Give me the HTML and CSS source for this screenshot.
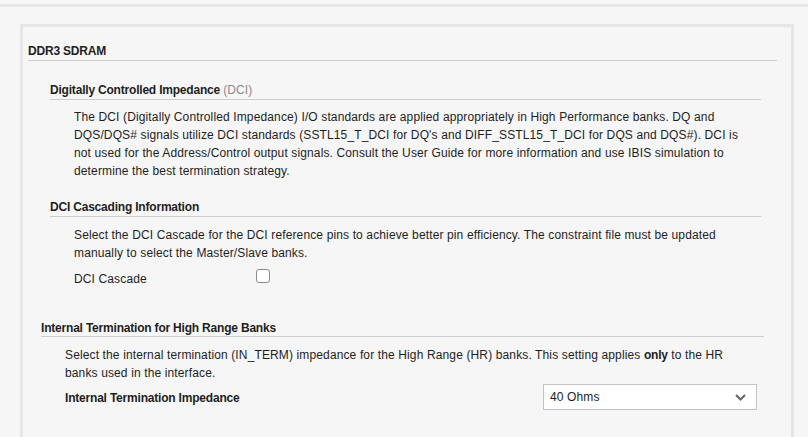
FILE: index.html
```html
<!DOCTYPE html>
<html>
<head>
<meta charset="utf-8">
<link rel="stylesheet" href="styles.css">
</head>
<body>
<div class="topbar"></div>
<div class="panel">
  <h1 class="main-title">DDR3 SDRAM</h1>

  <section class="sub">
    <h2 class="sub-title">Digitally Controlled Impedance <span class="muted">(DCI)</span></h2>
    <p class="desc">The DCI (Digitally Controlled Impedance) I/O standards are applied appropriately in High Performance banks. DQ and DQS/DQS# signals utilize DCI standards (SSTL15_T_DCI for DQ's and DIFF_SSTL15_T_DCI for DQS and DQS#). DCI is not used for the Address/Control output signals. Consult the User Guide for more information and use IBIS simulation to determine the best termination strategy.</p>
  </section>

  <section class="sub sub-cascade">
    <h2 class="sub-title">DCI Cascading Information</h2>
    <p class="desc">Select the DCI Cascade for the DCI reference pins to achieve better pin efficiency. The constraint file must be updated manually to select the Master/Slave banks.</p>
    <div class="row-check">
      <span class="lbl">DCI Cascade</span>
      <span class="checkbox"></span>
    </div>
  </section>

  <section class="sub3">
    <h2 class="sub-title">Internal Termination for High Range Banks</h2>
    <p class="desc">Select the internal termination (IN_TERM) impedance for the High Range (HR) banks. This setting applies <b>only</b> to the HR banks used in the interface.</p>
    <div class="row-select">
      <span class="lbl-bold">Internal Termination Impedance</span>
      <div class="select">
        <span>40 Ohms</span>
        <svg class="chev" width="11" height="7" viewBox="0 0 11 7"><path d="M1 1 L5.5 5.5 L10 1" fill="none" stroke="#666" stroke-width="2"/></svg>
      </div>
    </div>
  </section>
</div>
</body>
</html>
```

FILE: styles.css
```css
html, body {
  margin: 0;
  padding: 0;
  background: #f6f6f6;
  font-family: "Liberation Sans", Arial, sans-serif;
  font-size: 12px;
  color: #1e1e1e;
  overflow: hidden;
}

.topbar {
  margin-top: 4px;
  height: 3px;
  background: #e6e6e6;
}

.panel {
  margin: 17px 14px 0 20px;
  border: 3px solid #e6e6e6;
  border-bottom: none;
  height: 420px;
  padding: 17px 14px 0 5px;
}

.main-title,
.sub-title {
  margin: 0;
  font-size: 12px;
  line-height: 14px;
  font-weight: bold;
  letter-spacing: -0.2px;
  padding-bottom: 2px;
  border-bottom: 1px solid #cccccc;
}

.sub {
  margin: 22px 16px 0 22px;
}

.sub-cascade {
  margin-top: 20px;
}

.muted {
  color: #8a8a8a;
  font-weight: normal;
  letter-spacing: 0.1px;
}

.desc {
  margin: 8px 19px 0 24px;
  line-height: 18px;
  letter-spacing: 0.13px;
}

.desc b {
  letter-spacing: -0.2px;
}

.sub-cascade .desc {
  margin-top: 9px;
}

.row-check {
  margin: 6px 0 0 24px;
  display: flex;
  align-items: center;
  height: 18px;
}

.lbl {
  width: 182px;
  line-height: 18px;
  padding-top: 3px;
  letter-spacing: 0.13px;
}

.checkbox {
  width: 12px;
  height: 12px;
  border: 1px solid #8c8c8c;
  border-radius: 3px;
  background: #fff;
  margin-top: -3px;
}

.sub3 {
  margin: 35px 13px 0 13px;
}

.sub3 .sub-title {
  padding-bottom: 1px;
}

.sub3 .desc {
  margin: 9px 22px 0 24px;
}

.row-select {
  margin: 2px 7px 0 24px;
  display: flex;
  justify-content: space-between;
  align-items: center;
}

.lbl-bold {
  font-weight: bold;
  letter-spacing: -0.2px;
  padding-top: 1px;
}

.select {
  box-sizing: border-box;
  width: 214px;
  height: 26px;
  border: 1px solid #c4c4c4;
  background: #fff;
  display: flex;
  align-items: center;
  justify-content: space-between;
  padding: 0 10px 0 6px;
  letter-spacing: 0.13px;
}

.chev {
  display: block;
}
```
